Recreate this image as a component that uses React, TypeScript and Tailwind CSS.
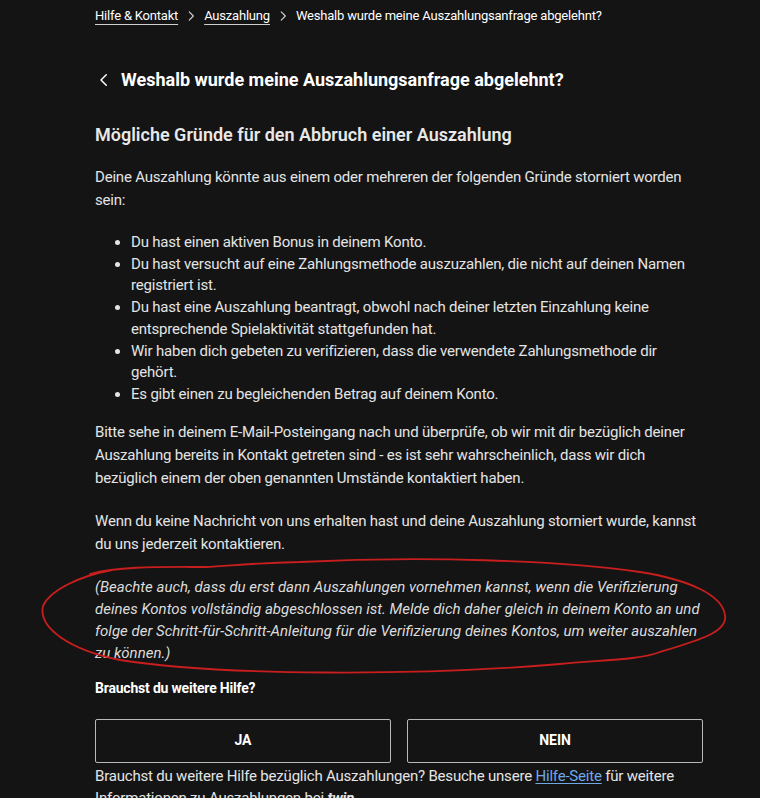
import React from 'react';

const bullets = [
  'Du hast einen aktiven Bonus in deinem Konto.',
  'Du hast versucht auf eine Zahlungsmethode auszuzahlen, die nicht auf deinen Namen registriert ist.',
  'Du hast eine Auszahlung beantragt, obwohl nach deiner letzten Einzahlung keine entsprechende Spielaktivität stattgefunden hat.',
  'Wir haben dich gebeten zu verifizieren, dass die verwendete Zahlungsmethode dir gehört.',
  'Es gibt einen zu begleichenden Betrag auf deinem Konto.',
];

function Chevron({ dir, className }: { dir: 'left' | 'right'; className?: string }) {
  return (
    <svg viewBox="0 0 24 24" className={className} fill="none" stroke="currentColor" strokeWidth={2} strokeLinecap="round" strokeLinejoin="round">
      {dir === 'right' ? <path d="M9 5l7 7-7 7" /> : <path d="M15 5l-7 7 7 7" />}
    </svg>
  );
}

export default function App() {
  return (
    <div className="relative h-[798px] overflow-hidden bg-[#141414] text-[#e4e4e4]" style={{ fontFamily: 'Roboto, "Noto Sans", sans-serif' }}>
      <div className="ml-[95px] w-[608px]">
        {/* Breadcrumb */}
        <nav className="flex items-center pt-[6px] text-[13px] leading-[20px] tracking-[-0.2px] text-white">
          <span className="underline decoration-[#cfcfcf] underline-offset-[4px]">Hilfe &amp; Kontakt</span>
          <Chevron dir="right" className="mx-[6px] h-[14px] w-[14px] text-[#d0d0d0]" />
          <span className="underline decoration-[#cfcfcf] underline-offset-[4px]">Auszahlung</span>
          <Chevron dir="right" className="mx-[6px] h-[14px] w-[14px] text-[#d0d0d0]" />
          <span>Weshalb wurde meine Auszahlungsanfrage abgelehnt?</span>
        </nav>

        {/* Titel */}
        <div className="mt-[41px] flex items-center gap-[8px]">
          <Chevron dir="left" className="h-[18px] w-[18px] text-white" />
          <h1 className="text-[18px] font-bold leading-[26px] text-white">Weshalb wurde meine Auszahlungsanfrage abgelehnt?</h1>
        </div>

        <h2 className="mt-[29px] text-[18px] font-semibold leading-[26px] text-[#e8e8e8]">Mögliche Gründe für den Abbruch einer Auszahlung</h2>

        <div className="text-[15px] tracking-[-0.2px]">
          <p className="mt-[18px] leading-[23px]">
            Deine Auszahlung könnte aus einem oder mehreren der folgenden Gründe storniert worden sein:
          </p>

          <ul className="mt-[20px] list-disc pl-[36px] leading-[21.7px]">
            {bullets.map((b) => (
              <li key={b}>{b}</li>
            ))}
          </ul>

          <p className="mt-[15px] leading-[23px]">
            Bitte sehe in deinem E-Mail-Posteingang nach und überprüfe, ob wir mit dir bezüglich deiner Auszahlung bereits in Kontakt getreten sind - es ist sehr wahrscheinlich, dass wir dich bezüglich einem der oben genannten Umstände kontaktiert haben.
          </p>

          <p className="mt-[20px] leading-[23px]">
            Wenn du keine Nachricht von uns erhalten hast und deine Auszahlung storniert wurde, kannst du uns jederzeit kontaktieren.
          </p>

          <p className="mt-[20px] italic leading-[22px] tracking-normal text-[#dcdcdc]">
            (Beachte auch, dass du erst dann Auszahlungen vornehmen kannst, wenn die Verifizierung deines Kontos vollständig abgeschlossen ist. Melde dich daher gleich in deinem Konto an und folge der Schritt-für-Schritt-Anleitung für die Verifizierung deines Kontos, um weiter auszahlen zu können.)
          </p>
        </div>

        <p className="mt-[14px] text-[14px] font-bold leading-[20px] tracking-[-0.2px] text-white">Brauchst du weitere Hilfe?</p>

        <div className="mt-[21px] grid grid-cols-2 gap-[16px]">
          <button className="h-[44px] rounded-[2px] border-[1.5px] border-[#b8b8b8] text-[14px] font-bold text-white">JA</button>
          <button className="h-[44px] rounded-[2px] border-[1.5px] border-[#b8b8b8] text-[14px] font-bold text-white">NEIN</button>
        </div>

        <p className="mt-[2px] text-[15px] leading-[22px] tracking-[-0.2px]">
          Brauchst du weitere Hilfe bezüglich Auszahlungen? Besuche unsere{' '}
          <span className="text-[#6fa8e6] underline underline-offset-2">Hilfe-Seite</span> für weitere Informationen zu Auszahlungen bei <b><i>twin</i></b>.
        </p>
      </div>

      {/* rote Markierung */}
      <svg className="pointer-events-none absolute left-0 top-0" width="760" height="798" viewBox="0 0 760 798" fill="none">
        <path
          d="M112 570 C 80 576, 50 590, 43 606 C 38 628, 70 650, 120 660 C 220 676, 420 676, 560 664 C 600 660, 640 660, 660 652 C 700 640, 728 632, 725 615 C 722 595, 690 580, 640 572 C 560 560, 420 556, 300 562 C 250 563, 230 566, 205 567 C 160 567, 120 566, 90 574"
          stroke="#c81e1e"
          strokeWidth={1.8}
          strokeLinecap="round"
        />
      </svg>
    </div>
  );
}
